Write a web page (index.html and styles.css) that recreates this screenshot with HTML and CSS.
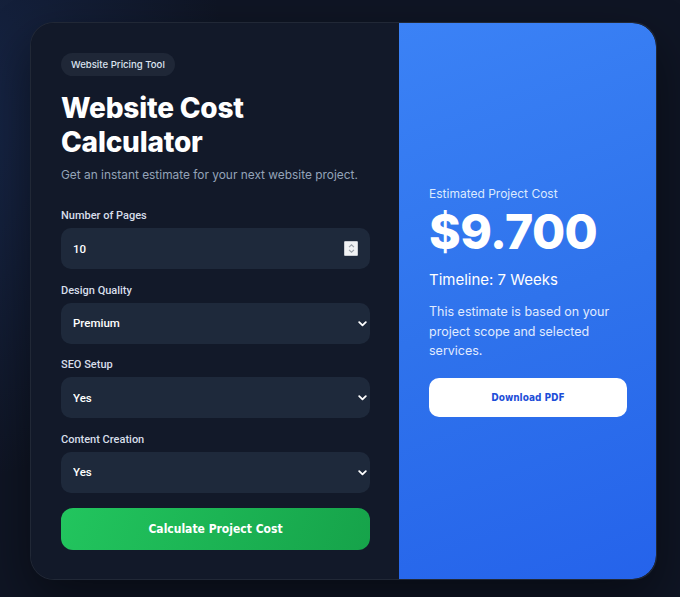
FILE: index.html
```html
<!DOCTYPE html>
<html lang="en">
<head>
<meta charset="utf-8">
<title>Website Cost Calculator</title>
<link rel="stylesheet" href="styles.css">
</head>
<body>
<main class="card">
  <section class="form-panel">
    <span class="badge">Website Pricing Tool</span>
    <h1 class="title">Website Cost<br>Calculator</h1>
    <p class="subtitle">Get an instant estimate for your next website project.</p>

    <div class="field">
      <label class="label" for="pages">Number of Pages</label>
      <div class="control">
        <input class="input" id="pages" type="number" value="10">
        <span class="spinner" aria-hidden="true">
          <svg width="9" height="11" viewBox="0 0 9 11"><path d="M2 4.2 4.5 1.8 7 4.2M2 6.8 4.5 9.2 7 6.8" fill="none" stroke="#9aa0a8" stroke-width="1.1"/></svg>
        </span>
      </div>
    </div>

    <div class="field">
      <label class="label" for="quality">Design Quality</label>
      <div class="control">
        <select class="input select" id="quality">
          <option>Premium</option>
        </select>
        <svg class="chevron" width="9" height="6" viewBox="0 0 9 6"><path d="M1.2 1.2 4.5 4.4 7.8 1.2" fill="none" stroke="#fff" stroke-width="1.8" stroke-linecap="round" stroke-linejoin="round"/></svg>
      </div>
    </div>

    <div class="field">
      <label class="label" for="seo">SEO Setup</label>
      <div class="control">
        <select class="input select" id="seo">
          <option>Yes</option>
        </select>
        <svg class="chevron" width="9" height="6" viewBox="0 0 9 6"><path d="M1.2 1.2 4.5 4.4 7.8 1.2" fill="none" stroke="#fff" stroke-width="1.8" stroke-linecap="round" stroke-linejoin="round"/></svg>
      </div>
    </div>

    <div class="field">
      <label class="label" for="content">Content Creation</label>
      <div class="control">
        <select class="input select" id="content">
          <option>Yes</option>
        </select>
        <svg class="chevron" width="9" height="6" viewBox="0 0 9 6"><path d="M1.2 1.2 4.5 4.4 7.8 1.2" fill="none" stroke="#fff" stroke-width="1.8" stroke-linecap="round" stroke-linejoin="round"/></svg>
      </div>
    </div>

    <button class="calc-btn" type="button">Calculate Project Cost</button>
  </section>

  <section class="result-panel">
    <p class="result-label">Estimated Project Cost</p>
    <p class="result-price">$9.700</p>
    <p class="result-timeline">Timeline: 7 Weeks</p>
    <p class="result-note">This estimate is based on your project scope and selected services.</p>
    <button class="pdf-btn" type="button">Download PDF</button>
  </section>
</main>
</body>
</html>
```

FILE: styles.css
```css
* {
  box-sizing: border-box;
}

html, body {
  height: 100%;
}

body {
  margin: 0;
  padding: 22px 23px 17px 30px;
  font-family: Inter, "Noto Sans", sans-serif;
  color: #fff;
  background:
    radial-gradient(ellipse 420px 520px at -60px 120px, rgba(37, 70, 140, 0.35), rgba(37, 70, 140, 0) 70%),
    #0f1524;
}

.card {
  display: grid;
  grid-template-columns: 368px 1fr;
  width: 627px;
  height: 558px;
  border-radius: 24px;
  overflow: hidden;
  background: #111827;
  border: 1px solid rgba(255, 255, 255, 0.07);
  box-shadow: 0 20px 50px rgba(0, 0, 0, 0.45);
}

/* left: the form */
.form-panel {
  display: flex;
  flex-direction: column;
  align-items: flex-start;
  padding: 30px 29px 29px 30px;
  background: #121929;
}

.badge {
  display: inline-flex;
  align-items: center;
  height: 23px;
  padding: 0 10px;
  border-radius: 999px;
  background: #1f2737;
  color: #dbe3ef;
  font-size: 9.6px;
  font-weight: 500;
}

.title {
  margin: 15px 0 0;
  font-size: 28px;
  line-height: 34px;
  font-weight: 800;
  letter-spacing: -0.2px;
}

.subtitle {
  margin: 7px 0 0;
  font-size: 11.9px;
  line-height: 17px;
  color: #94a3b8;
  white-space: nowrap;
}

.field {
  display: flex;
  flex-direction: column;
  width: 100%;
  margin-top: 14.5px;
}

.subtitle + .field {
  margin-top: 26px;
}

.label {
  font-family: Roboto, "Liberation Sans", sans-serif;
  font-size: 11px;
  line-height: 14px;
  font-weight: 500;
  color: #d7dee9;
  margin-bottom: 5px;
}

.control {
  position: relative;
}

.input {
  display: block;
  width: 100%;
  height: 41px;
  padding: 0 12px;
  border: none;
  border-radius: 10px;
  background: #1e293b;
  color: #fff;
  font-family: Roboto, "Liberation Sans", sans-serif;
  font-size: 11.5px;
  font-weight: 500;
  outline: none;
  -moz-appearance: textfield;
  appearance: none;
}

.input::-webkit-inner-spin-button,
.input::-webkit-outer-spin-button {
  -webkit-appearance: none;
  margin: 0;
}

.spinner {
  position: absolute;
  top: 13px;
  right: 12px;
  width: 14px;
  height: 15px;
  display: flex;
  align-items: center;
  justify-content: center;
  background: #f1f2f4;
  border: 1px solid #c9ccd2;
  border-radius: 1px;
}

.chevron {
  position: absolute;
  top: 18px;
  right: 3px;
  pointer-events: none;
}

.calc-btn {
  width: 100%;
  height: 42px;
  margin-top: 15px;
  border: none;
  border-radius: 12px;
  background: linear-gradient(110deg, #22c55e, #16a34a);
  color: #fff;
  font-family: "DejaVu Sans Condensed", "DejaVu Sans", sans-serif;
  font-size: 12px;
  font-weight: 700;
}

/* right: the estimate */
.result-panel {
  display: flex;
  flex-direction: column;
  justify-content: flex-start;
  padding: 163px 29px 0 30px;
  background: linear-gradient(160deg, #3b82f6 0%, #2f73ec 50%, #2563eb 100%);
  border-radius: 0 24px 24px 0;
}

.result-panel p {
  margin: 0;
}

.result-label {
  font-size: 12px;
  line-height: 16px;
  color: #dbeafe;
}

.result-panel .result-price {
  margin-top: 4px;
  font-size: 48px;
  line-height: 52px;
  font-weight: 800;
  letter-spacing: -0.5px;
}

.result-panel .result-timeline {
  margin-top: 12px;
  font-size: 15px;
  line-height: 20px;
  font-weight: 400;
}

.result-panel .result-note {
  margin-top: 12px;
  font-size: 12.5px;
  line-height: 19.5px;
  color: #e0ebff;
}

.pdf-btn {
  width: 100%;
  height: 39px;
  margin-top: 17px;
  border: none;
  border-radius: 10px;
  background: #fff;
  color: #1d4ed8;
  font-family: "DejaVu Sans Condensed", "DejaVu Sans", sans-serif;
  font-size: 10px;
  font-weight: 700;
}
```
